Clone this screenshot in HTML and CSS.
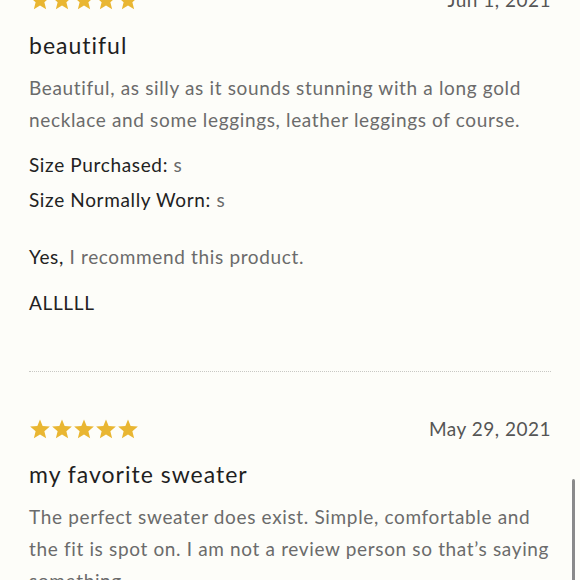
FILE: index.html
```html
<!DOCTYPE html>
<html>
<head>
<meta charset="utf-8">
<link rel="stylesheet" href="styles.css">
</head>
<body>
<div class="page">
  <div class="review first">
    <div class="head">
      <div class="stars">
        <svg viewBox="0 0 24 23"><polygon points="12,0.5 14.9,7.6 22.8,8.2 16.8,13.3 18.7,21.2 12,16.9 5.3,21.2 7.2,13.3 1.2,8.2 9.1,7.6"/></svg>
        <svg viewBox="0 0 24 23"><polygon points="12,0.5 14.9,7.6 22.8,8.2 16.8,13.3 18.7,21.2 12,16.9 5.3,21.2 7.2,13.3 1.2,8.2 9.1,7.6"/></svg>
        <svg viewBox="0 0 24 23"><polygon points="12,0.5 14.9,7.6 22.8,8.2 16.8,13.3 18.7,21.2 12,16.9 5.3,21.2 7.2,13.3 1.2,8.2 9.1,7.6"/></svg>
        <svg viewBox="0 0 24 23"><polygon points="12,0.5 14.9,7.6 22.8,8.2 16.8,13.3 18.7,21.2 12,16.9 5.3,21.2 7.2,13.3 1.2,8.2 9.1,7.6"/></svg>
        <svg viewBox="0 0 24 23"><polygon points="12,0.5 14.9,7.6 22.8,8.2 16.8,13.3 18.7,21.2 12,16.9 5.3,21.2 7.2,13.3 1.2,8.2 9.1,7.6"/></svg>
      </div>
      <span class="date">Jun 1, 2021</span>
    </div>
    <h3 class="title">beautiful</h3>
    <p class="body">Beautiful, as silly as it sounds stunning with a long gold necklace and some leggings, leather leggings of course.</p>
    <div class="attrs">
      <div class="attr"><span class="label">Size Purchased:</span> <span class="val">s</span></div>
      <div class="attr"><span class="label">Size Normally Worn:</span> <span class="val">s</span></div>
    </div>
    <div class="recommend"><span class="label">Yes,</span> <span class="val">I recommend this product.</span></div>
    <div class="author">ALLLLL</div>
  </div>
  <div class="review">
    <div class="head">
      <div class="stars">
        <svg viewBox="0 0 24 23"><polygon points="12,0.5 14.9,7.6 22.8,8.2 16.8,13.3 18.7,21.2 12,16.9 5.3,21.2 7.2,13.3 1.2,8.2 9.1,7.6"/></svg>
        <svg viewBox="0 0 24 23"><polygon points="12,0.5 14.9,7.6 22.8,8.2 16.8,13.3 18.7,21.2 12,16.9 5.3,21.2 7.2,13.3 1.2,8.2 9.1,7.6"/></svg>
        <svg viewBox="0 0 24 23"><polygon points="12,0.5 14.9,7.6 22.8,8.2 16.8,13.3 18.7,21.2 12,16.9 5.3,21.2 7.2,13.3 1.2,8.2 9.1,7.6"/></svg>
        <svg viewBox="0 0 24 23"><polygon points="12,0.5 14.9,7.6 22.8,8.2 16.8,13.3 18.7,21.2 12,16.9 5.3,21.2 7.2,13.3 1.2,8.2 9.1,7.6"/></svg>
        <svg viewBox="0 0 24 23"><polygon points="12,0.5 14.9,7.6 22.8,8.2 16.8,13.3 18.7,21.2 12,16.9 5.3,21.2 7.2,13.3 1.2,8.2 9.1,7.6"/></svg>
      </div>
      <span class="date">May 29, 2021</span>
    </div>
    <h3 class="title">my favorite sweater</h3>
    <p class="body">The perfect sweater does exist. Simple, comfortable and the fit is spot on. I am not a review person so that’s saying something.</p>
  </div>
</div>
<div class="scrollbar"></div>
</body>
</html>
```

FILE: styles.css
```css
html, body {
  margin: 0;
  padding: 0;
  height: 580px;
  overflow: hidden;
  background: #fdfdf9;
}
body {
  font-family: Lato, "Liberation Sans", sans-serif;
  position: relative;
}
.page {
  padding: 0 29px;
}
.review.first {
  margin-top: -10px;
  padding-bottom: 53px;
  border-bottom: 1px dotted #c8c8c4;
  margin-bottom: 47px;
}
.head {
  display: flex;
  justify-content: space-between;
  align-items: center;
  height: 21px;
}
.stars {
  display: flex;
  gap: 0;
}
.stars svg {
  width: 22px;
  height: 21px;
  display: block;
  fill: #e9b632;
}
.date {
  font-size: 19px;
  line-height: 21px;
  color: #555;
  letter-spacing: 0.5px;
  position: relative;
  top: -1px;
}
.title {
  margin: 19px 0 0;
  font-size: 23px;
  line-height: 30px;
  font-weight: 400;
  color: #1f1f1f;
  letter-spacing: 1px;
}
.body {
  margin: 12px 0 0;
  font-size: 19px;
  line-height: 32px;
  color: #6b6b6b;
  letter-spacing: 0.65px;
}
.attrs {
  margin-top: 11px;
}
.attr {
  font-size: 19px;
  line-height: 35px;
  letter-spacing: 0.65px;
}
.label {
  color: #222;
}
.val {
  color: #6b6b6b;
}
.recommend {
  margin-top: 25px;
  font-size: 19px;
  line-height: 30px;
  letter-spacing: 0.65px;
}
.author {
  margin-top: 16px;
  font-size: 19px;
  line-height: 30px;
  color: #222;
  letter-spacing: 0.65px;
}
.scrollbar {
  position: absolute;
  left: 572px;
  top: 479px;
  width: 3px;
  height: 110px;
  border-radius: 2px;
  background: #8a8a8a;
}
```
